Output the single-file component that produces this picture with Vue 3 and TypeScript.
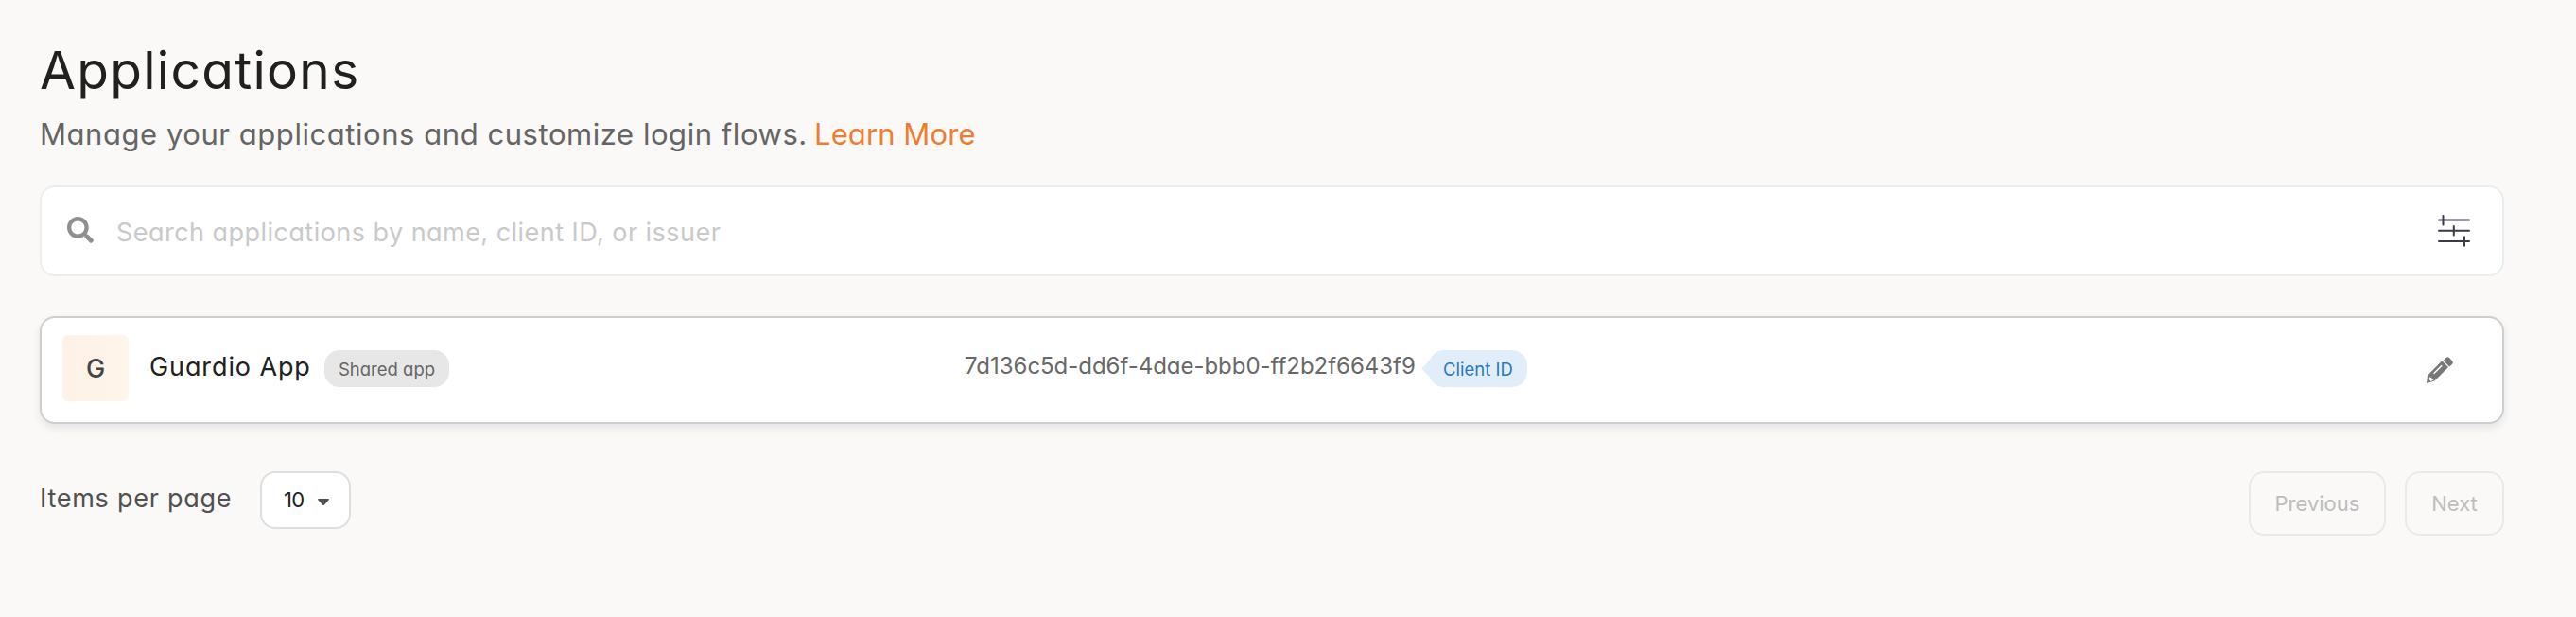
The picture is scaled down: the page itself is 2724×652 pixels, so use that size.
<script setup lang="ts">
import { ref } from 'vue'

interface Application {
  name: string
  clientId: string
  shared: boolean
}

const applications: Application[] = [
  { name: 'Guardio App', clientId: '7d136c5d-dd6f-4dae-bbb0-ff2b2f6643f9', shared: true },
]
const query = ref('')
const pageSize = ref(10)
</script>

<template>
  <main class="page">
    <h1>Applications</h1>
    <p class="lead">
      <span class="lead-text">Manage your applications and customize login flows.</span>
      <a>Learn More</a>
    </p>

    <div class="search">
      <svg class="search-icon" viewBox="0 0 512 512">
        <path d="M505 442.700 405.300 343c-4.500-4.500-10.600-7-17-7H372c27.600-35.300 44-79.700 44-128C416 93.100 322.900 0 208 0S0 93.100 0 208s93.100 208 208 208c48.300 0 92.700-16.400 128-44v16.300c0 6.400 2.500 12.500 7 17l99.700 99.700c9.400 9.400 24.600 9.400 33.900 0l28.300-28.300c9.400-9.400 9.400-24.600.1-34zM208 336c-70.700 0-128-57.200-128-128 0-70.700 57.200-128 128-128 70.700 0 128 57.200 128 128 0 70.700-57.200 128-128 128z" />
      </svg>
      <input v-model="query" type="text" placeholder="Search applications by name, client ID, or issuer" />
      <svg class="filter-icon" viewBox="0 0 34 34">
        <path d="M1 5.500h32M1 16.800h32M1 28h32M5.500 1v9.500M16.800 12v9.500M28 23.200v9.500" />
      </svg>
    </div>

    <article v-for="app in applications" :key="app.clientId" class="card">
      <div class="name-cell">
        <span class="avatar">{{ app.name.charAt(0) }}</span>
        <span class="name">{{ app.name }}</span>
        <span v-if="app.shared" class="badge">Shared app</span>
      </div>
      <div class="id-cell">
        <span class="client-id">{{ app.clientId }}</span>
        <span class="tag">Client ID</span>
      </div>
      <svg class="edit-icon" viewBox="0 0 28 28">
        <path class="body" d="M17 5 23 11 9.500 24.500Q8.500 25.500 7.500 25.800L0 28 .800 21Q1 19.600 2.200 18.500L15.600 5.100Q16.300 4.400 17 5Z" />
        <path class="body" d="M17.700 4 20.600 1.100Q22.300-.600 24 1L27 4.200Q28.600 6 27.200 7.700L24.100 10.400Z" />
        <path class="groove" d="M7.600 17.800 16.200 9.200" />
        <path class="nib" d="M3.600 21.300 5.400 22.500 7.200 24.600 4.600 26 2.300 23.800Z" />
      </svg>
    </article>

    <footer class="footer">
      <span class="per-page">Items per page</span>
      <button class="select">
        <span>{{ pageSize }}</span>
        <svg viewBox="0 0 12 7"><path d="M1 0h10q1.500.300.500 1.500L7 6.500q-1 1-2 0L.500 1.500Q-.500.300 1 0z" /></svg>
      </button>
      <nav class="pager">
        <button class="prev" disabled>Previous</button>
        <button class="next" disabled>Next</button>
      </nav>
    </footer>
  </main>
</template>

<style>
body {
  margin: 0;
  background: #faf9f7;
}
</style>

<style scoped>
* {
  box-sizing: border-box;
}
.page {
  width: 2724px;
  height: 652px;
  padding: 44px 76px 0 42px;
  overflow: hidden;
  background: #faf9f7;
  font-family: Inter, 'Liberation Sans', sans-serif;
  font-feature-settings: 'cv11';
  font-weight: 400;
  white-space: nowrap;
}
h1 {
  margin: 0;
  font-size: 55px;
  font-weight: 400;
  line-height: 60px;
  letter-spacing: 1.300px;
  color: #202020;
}
.lead {
  display: flex;
  margin: 18px 0 0;
  font-size: 31px;
  line-height: 40px;
  color: #656565;
}
.lead-text {
  width: 819px;
  letter-spacing: 0.550px;
}
.lead a {
  color: #f07c30;
  letter-spacing: 0.100px;
}
.search {
  display: flex;
  align-items: center;
  height: 96px;
  margin-top: 34px;
  padding: 0 34px 0 27px;
  border: 2px solid #ebedef;
  border-radius: 16px;
  background: #fff;
}
.search-icon {
  width: 28px;
  height: 28px;
  margin-top: -2px;
  fill: #8f8f8f;
}
input {
  flex: 1;
  height: 60px;
  margin-left: 24px;
  padding: 2px 0 0;
  border: 0;
  outline: 0;
  background: none;
  font: inherit;
  font-feature-settings: inherit;
  font-size: 27px;
  letter-spacing: 0.460px;
}
input::placeholder {
  color: #c9c9c9;
  opacity: 1;
}
.filter-icon {
  width: 34px;
  height: 34px;
  fill: none;
  stroke: #3d3948;
  stroke-width: 2;
  stroke-linecap: round;
}
.card {
  display: grid;
  grid-template-columns: 954px 1fr 28px;
  align-items: center;
  height: 114px;
  margin-top: 42px;
  padding: 0 52px 4px 22px;
  border: 2px solid #cecece;
  border-radius: 16px;
  background: #fff;
  box-shadow: 0 4px 8px rgba(40, 40, 90, 0.1);
}
.name-cell,
.id-cell {
  display: flex;
  align-items: center;
}
.avatar {
  width: 70px;
  height: 70px;
  border-radius: 6px;
  background: linear-gradient(90deg, #fdf1e8, #fff5ea);
  color: #444;
  font-size: 27px;
  font-weight: 500;
  line-height: 72px;
  text-align: center;
}
.name {
  width: 184px;
  margin-top: -3px;
  margin-left: 22px;
  font-size: 27px;
  line-height: 36px;
  letter-spacing: 0.900px;
  color: #202020;
}
.badge,
.tag {
  height: 39px;
  border-radius: 16px;
  font-size: 18.500px;
  line-height: 41px;
  text-align: center;
}
.badge {
  width: 132px;
  margin-top: 1px;
  margin-left: 1px;
  background: #e7e7e7;
  color: #656565;
}
.client-id {
  width: 491px;
  margin-top: -4px;
  font-size: 24px;
  line-height: 30px;
  letter-spacing: -0.030px;
  color: #686868;
}
.tag {
  position: relative;
  width: 104px;
  background: #e1eefa;
  color: #2b78be;
  font-weight: 400;
}
.tag::before {
  position: absolute;
  left: -8px;
  top: 8px;
  width: 12px;
  height: 24px;
  background: #e1eefa;
  clip-path: polygon(0 50%, 100% 0, 100% 100%);
  content: '';
}
.edit-icon {
  width: 28px;
  height: 28px;
  margin-top: 3px;
}
.body {
  fill: #777;
}
.groove {
  fill: none;
  stroke: #fff;
  stroke-width: 1.500;
}
.nib {
  fill: #fff;
}
.footer {
  display: flex;
  align-items: flex-start;
  margin-top: 50px;
}
.per-page {
  width: 233px;
  font-size: 27px;
  line-height: 57px;
  letter-spacing: 0.750px;
  color: #505050;
}
button {
  padding: 0;
  border: 2px solid #e9e9e9;
  border-radius: 16px;
  background: none;
  font: inherit;
  font-feature-settings: inherit;
  font-size: 22px;
  color: #bdbdbd;
}
.select {
  display: flex;
  align-items: center;
  width: 96px;
  height: 61px;
  padding: 0 0 2px 23px;
  border-color: #dedede;
  background: #fff;
  color: #202020;
}
.select span {
  width: 36px;
  text-align: left;
  letter-spacing: -0.800px;
}
.select svg {
  width: 12px;
  height: 7px;
  margin-top: 5px;
  fill: #505050;
}
.pager {
  display: flex;
  gap: 20px;
  margin-left: auto;
}
.pager button {
  height: 68px;
}
.prev {
  width: 145px;
}
.next {
  width: 105px;
}
</style>
